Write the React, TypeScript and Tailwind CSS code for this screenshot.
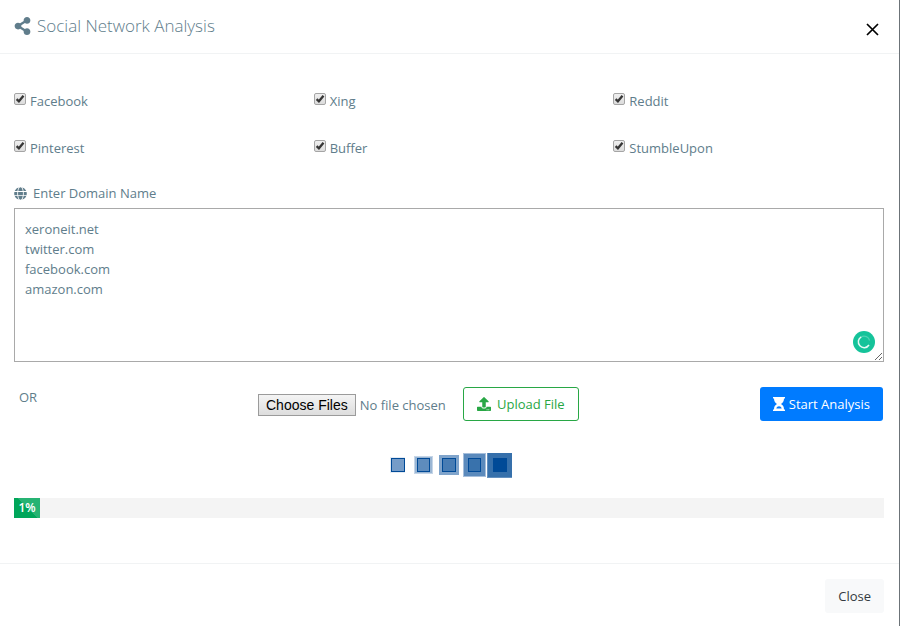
import React, { useState } from "react";
import { FaShareAlt, FaGlobe, FaUpload } from "react-icons/fa";

const networks = ["Facebook", "Xing", "Reddit", "Pinterest", "Buffer", "StumbleUpon"];

function NetworkOption({ name }: { name: string }) {
  const [checked, setChecked] = useState(true);
  return (
    <label className="flex items-start gap-1 pl-3.5">
      <span className="mt-0.5 grid h-3 w-3 shrink-0">
        <input
          type="checkbox"
          checked={checked}
          onChange={() => setChecked(!checked)}
          className="col-start-1 row-start-1 h-3 w-3 appearance-none rounded-xs border border-[#a5a5a5] bg-linear-to-b from-[#efefef] to-[#dcdcdc]"
        />
        {checked && (
          <svg viewBox="0 0 12 12" className="pointer-events-none col-start-1 row-start-1 h-3 w-3" aria-hidden="true">
            <path d="M2.6 6.2 4.9 8.3 9.5 2.8" fill="none" stroke="#363636" strokeWidth="2.3" />
          </svg>
        )}
      </span>
      {name}
    </label>
  );
}

function Hourglass() {
  return (
    <svg width="12" height="14" viewBox="0 0 12 14" fill="currentColor" aria-hidden="true">
      <path d="M0 0h12v1.6h-1c0 2.700-1.100 4.400-3 5.400 1.900 1 3 2.700 3 5.400h1V14H0v-1.600h1C1 9.700 2.100 8 4 7 2.100 6 1 4.300 1 1.600H0z" />
      <path d="M3.300 11.600C3.700 10 4.700 9.200 6 9.200s2.300.8 2.700 2.400z" fill="#007bff" />
    </svg>
  );
}

function Loader() {
  return (
    <svg width="124" height="26" viewBox="0 0 124 26" role="img" aria-label="Loading" shapeRendering="crispEdges">
      <rect x="1" y="4" width="15" height="16" fill="#e3ebf4" />
      <rect x="2.5" y="5.5" width="13" height="13" fill="#759cc8" stroke="#004a97" />
      <rect x="25" y="3" width="19" height="18" fill="#c5d5e7" />
      <rect x="26" y="4" width="17" height="16" fill="#9ab6d4" />
      <rect x="28.5" y="5.5" width="12" height="13" fill="#5e8cbd" stroke="#004a97" />
      <rect x="50" y="2" width="20" height="20" fill="#80a4cb" />
      <rect x="53.5" y="5.5" width="13" height="13" fill="#487cb3" stroke="#004a97" />
      <rect x="74" y="0" width="23" height="24" fill="#a5bedb" />
      <rect x="75" y="1" width="21" height="22" fill="#5b8abc" />
      <rect x="79.5" y="5.5" width="12" height="13" fill="#3972ac" stroke="#004a97" />
      <rect x="98" y="0" width="25" height="25" fill="#6390bf" />
      <rect x="99" y="0" width="24" height="24" fill="#3670ab" />
      <rect x="104" y="5" width="14" height="14" fill="#004a97" />
    </svg>
  );
}

export default function App() {
  const [domains, setDomains] = useState("xeroneit.net\ntwitter.com\nfacebook.com\namazon.com");
  return (
    <main className="min-h-screen border-r border-[#6c7378] bg-white font-['Open_Sans','Noto_Sans',sans-serif] text-[13px] leading-5 text-[#607d8b]">
      <header className="flex items-start justify-between border-b border-[#f1f3f4] pt-3 pr-5 pb-3.5 pl-3.5">
        <h1 className="flex items-center gap-1.5 text-[17px] leading-[27px] font-light">
          <FaShareAlt className="h-[18px] w-[17px]" />
          Social Network Analysis
        </h1>
        <button aria-label="Close dialog" className="mt-[11px] flex text-black">
          <svg width="13" height="13" viewBox="0 0 13 13" aria-hidden="true">
            <path d="m1 1 11 11M12 1 1 12" stroke="currentColor" strokeWidth="1.7" />
          </svg>
        </button>
      </header>

      <section>
        <div className="grid grid-cols-3 gap-y-[27px] pt-[37px]">
          {networks.map((name) => (
            <NetworkOption key={name} name={name} />
          ))}
        </div>

        <div className="pt-[25px] pr-[15px] pl-3.5">
          <label htmlFor="domains" className="flex items-center gap-1.5">
            <FaGlobe className="h-[13px] w-[13px]" />
            Enter Domain Name
          </label>
          <div className="relative mt-[5px]">
            <textarea
              id="domains"
              value={domains}
              onChange={(e) => setDomains(e.target.value)}
              spellCheck={false}
              className="block h-[154px] w-full resize border border-[#a9a9a9] px-2.5 py-2.5 leading-5 outline-none"
            />
            <svg width="22" height="22" viewBox="0 0 22 22" className="pointer-events-none absolute right-[9px] bottom-[9px]" aria-hidden="true">
              <circle cx="11" cy="11" r="11" fill="#15c39a" />
              <path d="M8.500 5.700A5.800 5.800 0 0 1 16.600 9.500" fill="none" stroke="#4fd2b3" strokeWidth="1.300" />
              <path d="M8.300 5.800A5.800 5.800 0 1 0 16 14" fill="none" stroke="#e6faf5" strokeWidth="1.500" />
            </svg>
          </div>
        </div>

        <div className="flex items-start pt-[25px] pr-4 pl-3.5">
          <span className="w-[244px] pl-[5px]">OR</span>
          <input
            type="file"
            multiple
            aria-label="Choose domain files"
            className="mt-[7px] w-[205px] file:mr-1 file:h-[22px] file:border file:border-solid file:border-[#9b9b9b] file:bg-linear-to-b file:from-[#f4f4f4] file:to-[#dddddd] file:px-[7px] file:font-['Liberation_Sans',Arial,sans-serif] file:text-sm file:leading-5 file:text-black"
          />
          <button className="flex h-[34px] items-center gap-1.5 rounded-[3px] border border-[#28a745] px-[13px] text-[#28a745]">
            <FaUpload className="h-3.5 w-3.5" />
            Upload File
          </button>
          <button className="ml-auto flex h-[34px] items-center gap-1 rounded-[3px] bg-[#007bff] px-[13px] text-white">
            <Hourglass />
            Start Analysis
          </button>
        </div>

        <div className="flex justify-center pt-8 pl-0.5">
          <Loader />
        </div>

        <div className="pt-[19px] pr-[15px] pb-[45px] pl-3.5">
          <div className="bg-[#f4f4f4]" role="progressbar" aria-label="Analysis progress" aria-valuenow={1} aria-valuemin={0} aria-valuemax={100}>
            <div className="w-[26px] bg-[#00a65a] bg-[linear-gradient(45deg,transparent_50%,rgba(255,255,255,0.15)_50%)] text-center text-xs leading-5 font-semibold text-white">
              1%
            </div>
          </div>
        </div>
      </section>

      <footer className="flex justify-end border-t border-[#f1f3f4] px-[15px] py-[15px]">
        <button className="h-[34px] rounded-[3px] bg-[#f8f9fa] px-[13px] text-[#343a40]">Close</button>
      </footer>
    </main>
  );
}
